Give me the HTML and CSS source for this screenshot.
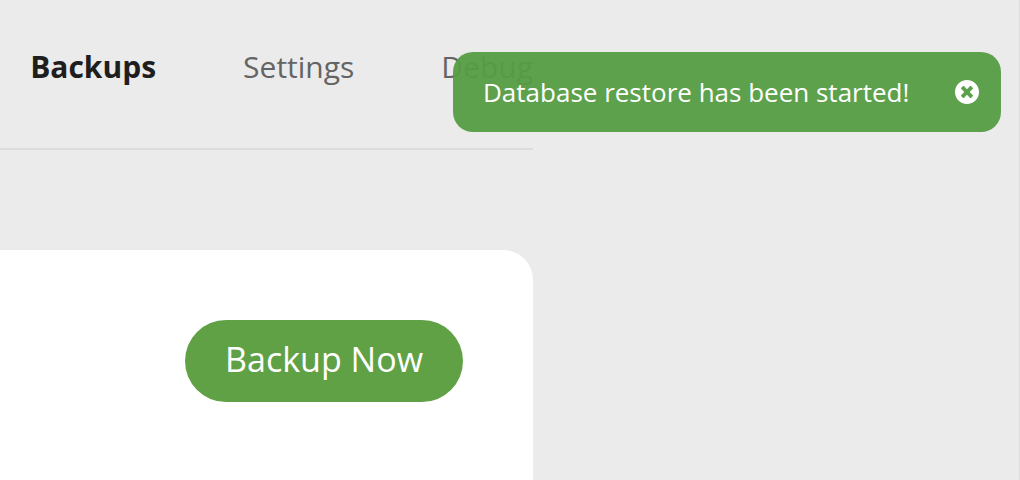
FILE: index.html
```html
<!DOCTYPE html>
<html lang="en">
<head>
<meta charset="utf-8">
<title>Backups</title>
<link rel="stylesheet" href="styles.css">
</head>
<body>
<div class="page">
  <nav class="tabs">
    <a class="tab tab-active" href="#backups">Backups</a>
    <a class="tab" href="#settings">Settings</a>
    <a class="tab" href="#debug">Debug</a>
  </nav>
  <main class="card">
    <button class="backup" type="button">Backup Now</button>
  </main>
</div>
<div class="toast" role="status">
  <span>Database restore has been started!</span>
  <button class="close" type="button" aria-label="Close">
    <svg viewBox="8 8 496 496" width="24" height="24" aria-hidden="true"><path fill="#fff" d="M256 8C119 8 8 119 8 256s111 248 248 248 248-111 248-248S393 8 256 8zm121.600 313.100c4.700 4.700 4.700 12.300 0 17L338 377.600c-4.700 4.700-12.300 4.700-17 0L256 312l-65.100 65.600c-4.700 4.700-12.300 4.700-17 0L134.400 338c-4.700-4.700-4.700-12.300 0-17l65.600-65-65.600-65.100c-4.700-4.700-4.700-12.300 0-17l39.600-39.600c4.700-4.700 12.300-4.700 17 0l65 65.700 65.100-65.600c4.700-4.700 12.300-4.700 17 0l39.600 39.600c4.700 4.700 4.700 12.300 0 17L312 256z"/></svg>
  </button>
</div>
</body>
</html>
```
FILE: styles.css
```css
* { box-sizing: border-box; }
body {
  margin: 0;
  min-height: 100vh;
  display: flex;
  background: #ebebeb;
  border-right: 1px solid #dcdcdc;
  font-family: "Open Sans", sans-serif;
}
.page {
  flex: 1;
  display: flex;
  flex-direction: column;
  margin-right: 486px;
}
.tabs {
  display: flex;
  justify-content: flex-end;
  gap: 87px;
  padding: 46px 0 60px;
  border-bottom: 2px solid #dcdcdc;
}
.tab {
  color: #646464;
  font-size: 30px;
  line-height: 42px;
  text-decoration: none;
}
.tab-active { color: #1e1e1e; font-weight: 700; }
.card {
  flex: 1;
  margin-top: 100px;
  padding: 70px;
  background: #fff;
  border-radius: 0 30px 0 0;
  text-align: right;
}
.backup {
  height: 82px;
  padding: 0 40px 4px;
  border: 0;
  border-radius: 41px;
  background: #61a146;
  color: #fff;
  font: 34px "Open Sans", sans-serif;
}
.toast {
  position: absolute;
  top: 52px;
  right: 19px;
  width: 548px;
  height: 80px;
  padding: 0 22px 0 30px;
  display: flex;
  align-items: center;
  justify-content: space-between;
  border-radius: 20px;
  background: rgba(86, 157, 67, 0.95);
  color: #fff;
  font-size: 26px;
}
.close { display: flex; padding: 0; border: 0; background: none; }
```
